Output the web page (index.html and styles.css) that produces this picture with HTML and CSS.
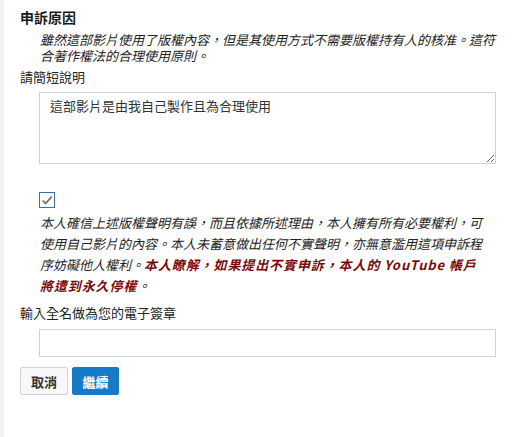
FILE: index.html
```html
<!DOCTYPE html>
<html lang="zh-Hant">
<head>
<meta charset="utf-8">
<title>申訴原因</title>
<link rel="stylesheet" href="styles.css">
</head>
<body>
<div class="page">
  <h2 class="title">申訴原因</h2>
  <p class="reason">雖然這部影片使用了版權內容，但是其使用方式不需要版權持有人的核准。這符合著作權法的合理使用原則。</p>
  <div class="label">請簡短說明</div>
  <textarea class="field area">這部影片是由我自己製作且為合理使用</textarea>
  <div class="check">
    <svg width="16" height="16" viewBox="0 0 16 16" aria-hidden="true"><path d="M3.6 8.6 L6.6 11.4 L12.8 4.6" fill="none" stroke="#7a7a7a" stroke-width="1.9"/></svg>
  </div>
  <p class="agree">本人確信上述版權聲明有誤，而且依據所述理由，本人擁有所有必要權利，可使用自己影片的內容。本人未蓄意做出任何不實聲明，亦無意濫用這項申訴程序妨礙他人權利。<strong class="warn">本人瞭解，如果提出不實申訴，本人的 YouTube 帳戶將遭到永久停權</strong>。</p>
  <div class="label sign">輸入全名做為您的電子簽章</div>
  <input class="field line" type="text">
  <div class="actions">
    <button class="btn cancel">取消</button>
    <button class="btn primary">繼續</button>
  </div>
</div>
</body>
</html>
```
FILE: styles.css
```css
html, body {
  margin: 0;
  padding: 0;
  background: #fff;
}
body {
  font-family: "Noto Sans CJK TC", "Liberation Sans", sans-serif;
  color: #222;
}
.page {
  border-left: 4px solid #f1f1f1;
  min-height: 437px;
  box-sizing: border-box;
  padding: 8px 17px 0 16px;
}
.title {
  margin: 0;
  font-size: 14px;
  line-height: 18px;
  font-weight: bold;
  color: #1a1a1a;
}
.reason {
  margin: 6px 0 0 20px;
  font-size: 13px;
  line-height: 16px;
  font-style: italic;
}
.label {
  margin-top: 5px;
  font-size: 13px;
  line-height: 16px;
}
.field {
  display: block;
  box-sizing: border-box;
  margin-left: 19px;
  width: 457px;
  border: 1px solid #d3d3d3;
  border-radius: 0;
  background: #fff;
  font-family: "Noto Sans CJK TC", "Liberation Sans", sans-serif;
  font-size: 13px;
  color: #333;
  outline: none;
}
.area {
  margin-top: 7px;
  height: 72px;
  padding: 4px 10px;
  line-height: 18px;
  resize: vertical;
}
.check {
  margin: 28px 0 0 19px;
  width: 16px;
  height: 16px;
  box-sizing: border-box;
  border: 1.5px solid #3a6db3;
  display: flex;
  align-items: center;
  justify-content: center;
}
.check svg {
  flex: none;
}
.agree {
  margin: 4px 0 0 20px;
  max-width: 444px;
  font-size: 13px;
  line-height: 21px;
  font-style: italic;
}
.warn {
  color: #7a0a0a;
  font-weight: bold;
  letter-spacing: 0.9px;
}
.sign {
  margin-top: 9px;
}
.line {
  margin-top: 8px;
  height: 28px;
  padding: 0 10px;
}
.actions {
  display: flex;
  gap: 4px;
  margin-top: 10px;
}
.btn {
  height: 28px;
  width: 48px;
  padding: 0;
  border-radius: 2px;
  font-family: "Noto Sans CJK TC", "Liberation Sans", sans-serif;
  font-size: 13px;
  font-weight: bold;
  cursor: pointer;
}
.cancel {
  background: #f8f8f8;
  border: 1px solid #d3d3d3;
  color: #333;
}
.primary {
  width: 47px;
  background: #167ac6;
  border: 1px solid #167ac6;
  color: #fff;
}
```
